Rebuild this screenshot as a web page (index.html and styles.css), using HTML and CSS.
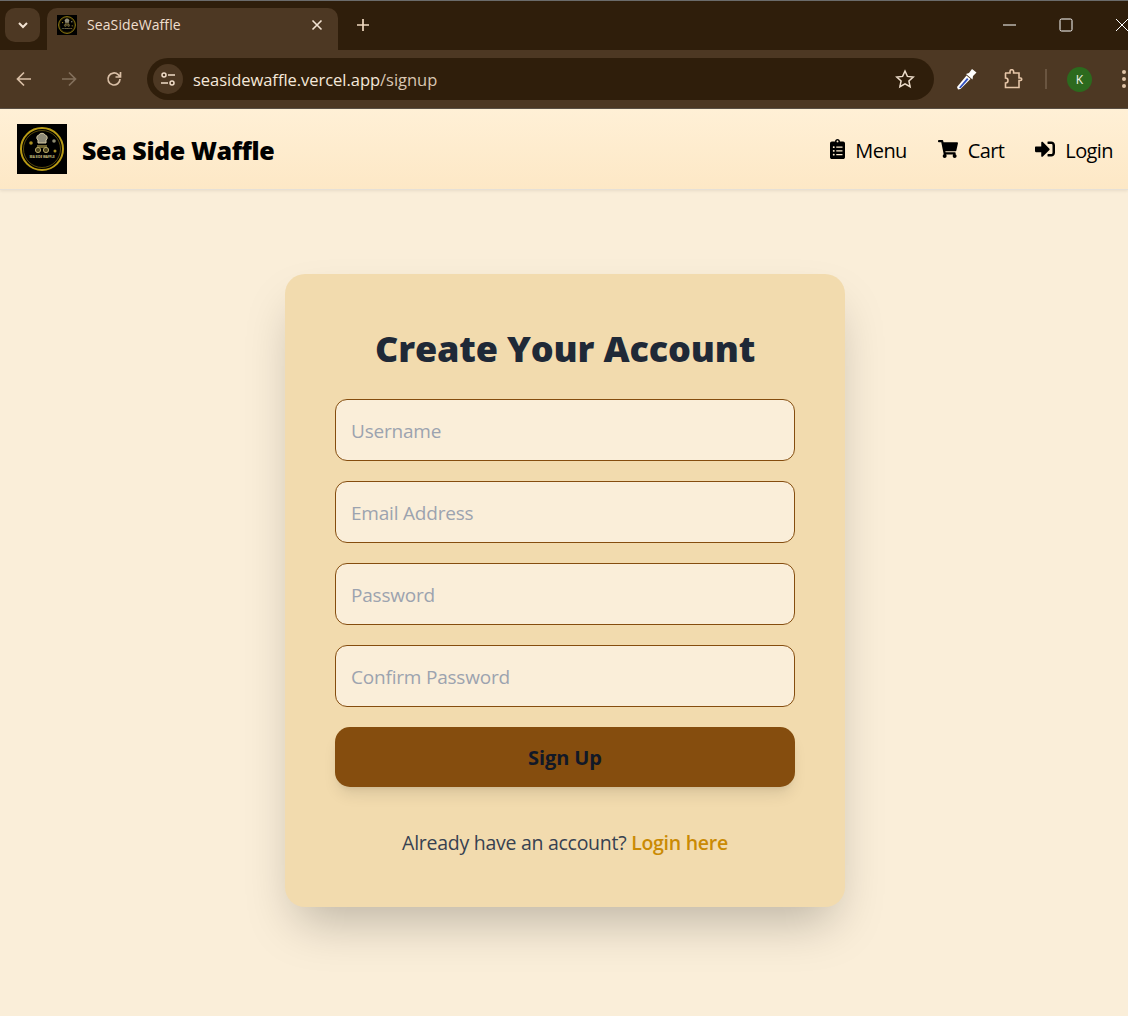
FILE: index.html
```html
<!DOCTYPE html>
<html lang="en">
<head>
  <meta charset="UTF-8">
  <meta name="viewport" content="width=device-width, initial-scale=1">
  <title>SeaSideWaffle</title>
  <link rel="stylesheet" href="styles.css">
</head>
<body>
  <!-- browser chrome -->
  <div class="tabstrip">
    <div class="tab-switch">
      <svg width="12" height="12" viewBox="0 0 12 12"><path d="M2 4l4 4 4-4" fill="none" stroke="#f3e3d3" stroke-width="2"/></svg>
    </div>
    <div class="tab">
      <svg class="favicon" width="20" height="20" viewBox="0 0 50 50"><use href="#logo"/></svg>
      <span class="tab-title">SeaSideWaffle</span>
      <svg class="tab-close" width="12" height="12" viewBox="0 0 12 12"><path d="M1.5 1.5l9 9M10.5 1.5l-9 9" stroke="#f3e3d3" stroke-width="1.6"/></svg>
    </div>
    <svg class="new-tab" width="14" height="14" viewBox="0 0 14 14"><path d="M7 1v12M1 7h12" stroke="#f0d9c0" stroke-width="1.7"/></svg>
    <div class="win-btns">
      <svg width="14" height="14" viewBox="0 0 14 14"><path d="M0 7h13" stroke="#fff" stroke-width="1"/></svg>
      <svg width="14" height="14" viewBox="0 0 14 14"><rect x="1" y="1" width="12" height="12" rx="1.5" fill="none" stroke="#fff"/></svg>
      <svg width="14" height="14" viewBox="0 0 14 14"><path d="M1 1l12 12M13 1L1 13" stroke="#fff"/></svg>
    </div>
  </div>
  <div class="toolbar">
    <svg class="tb-icon" width="18" height="18" viewBox="0 0 18 18"><path d="M16 9H2.5M9 2.5L2.5 9 9 15.500" fill="none" stroke="#d9bfa6" stroke-width="1.700"/></svg>
    <svg class="tb-icon" width="18" height="18" viewBox="0 0 18 18"><path d="M2 9h13.500M9 2.500L15.500 9 9 15.500" fill="none" stroke="#83705c" stroke-width="1.700"/></svg>
    <svg class="tb-icon" width="18" height="18" viewBox="0 0 18 18"><path d="M15 9a6 6 0 1 1-1.800-4.300L15.500 7M15.500 2v5h-5" fill="none" stroke="#d9bfa6" stroke-width="1.700"/></svg>
    <div class="omnibox">
      <div class="site-info">
        <svg width="16" height="16" viewBox="0 0 16 16" fill="none" stroke="#f0dcc8" stroke-width="1.500"><circle cx="4" cy="4" r="2"/><path d="M8 4h7M1 12h7"/><circle cx="12" cy="12" r="2"/></svg>
      </div>
      <span class="url"><span class="url-host">seasidewaffle.vercel.app</span>/signup</span>
      <svg class="star" width="20" height="20" viewBox="0 0 20 20"><path d="M10 2l2.400 5.400 5.800.6-4.300 3.900 1.200 5.800L10 14.800l-5.100 2.900 1.200-5.800L1.800 8l5.800-.6z" fill="none" stroke="#ecdcca" stroke-width="1.500"/></svg>
    </div>
    <svg class="dropper" width="20" height="22" viewBox="0 0 20 22"><path d="M1 21.500L0 19 9.500 7.500l4 3.500L3.500 21z" fill="#fff"/><path d="M2 19.500L10 10l1.500 1.300L3.500 20.300z" fill="#2f4fc0"/><path d="M9 6l3-1 3-4 4.500 3.500L16 8l-.5 3.500z" fill="#fff"/></svg>
    <svg class="puzzle" width="20" height="20" viewBox="0 0 20 20"><path d="M2 4h5V2.500a1.800 1.800 0 0 1 3.600 0V4H16v5h1.500a1 1 0 0 1 0 2.500H16v7H2.500v-4.500a2.200 2.200 0 0 0 0-5V4z" fill="none" stroke="#e6c6a8" stroke-width="1.600"/></svg>
    <span class="tb-sep"></span>
    <span class="avatar">K</span>
    <span class="kebab"><i></i><i></i><i></i></span>
  </div>

  <!-- site nav -->
  <nav class="navbar">
    <a class="brand" href="#">
      <svg class="logo" width="50" height="50" viewBox="0 0 50 50">
        <defs>
          <g id="logo">
            <rect width="50" height="50" fill="#000"/>
            <circle cx="25" cy="25" r="21" fill="none" stroke="#b89a14" stroke-width="2"/>
            <circle cx="25" cy="25" r="18.500" fill="none" stroke="#7d6812" stroke-width=".7"/>
            <path d="M21 16a2.800 2.800 0 0 1 .8-5 3.800 3.800 0 0 1 6.400 0 2.800 2.800 0 0 1 .8 5v3h-8z" fill="#8e8a78" stroke="#d6c9a0" stroke-width="1"/>
            <path d="M20 21h10v3H20z" fill="#6d6230"/>
            <circle cx="21" cy="26" r="2.600" fill="#4c4420" stroke="#b5a564" stroke-width="1"/>
            <circle cx="29" cy="26" r="2.600" fill="#4c4420" stroke="#b5a564" stroke-width="1"/>
            <circle cx="14" cy="19" r="1.800" fill="#a98f22"/>
            <circle cx="37" cy="17" r="1.800" fill="#8d8a70"/>
            <circle cx="38" cy="27" r="1.500" fill="#a98f22"/>
            <text class="logo-text" x="25" y="34" text-anchor="middle">SEA SIDE WAFFLE</text>
          </g>
        </defs>
        <use href="#logo"/>
      </svg>
      <span class="brand-name">Sea Side Waffle</span>
    </a>
    <div class="nav-links">
      <a href="#">
        <svg width="15" height="20" viewBox="0 0 384 512"><path d="M336 64h-80c0-35.300-28.700-64-64-64s-64 28.700-64 64H48C21.500 64 0 85.500 0 112v352c0 26.500 21.500 48 48 48h288c26.500 0 48-21.500 48-48V112c0-26.500-21.500-48-48-48zM96 424c-13.300 0-24-10.700-24-24s10.700-24 24-24 24 10.700 24 24-10.700 24-24 24zm0-96c-13.300 0-24-10.700-24-24s10.700-24 24-24 24 10.700 24 24-10.700 24-24 24zm0-96c-13.300 0-24-10.700-24-24s10.700-24 24-24 24 10.700 24 24-10.700 24-24 24zm96-192c13.300 0 24 10.700 24 24s-10.700 24-24 24-24-10.700-24-24 10.700-24 24-24zm128 368c0 4.400-3.600 8-8 8H168c-4.400 0-8-3.600-8-8v-16c0-4.400 3.600-8 8-8h144c4.400 0 8 3.600 8 8v16zm0-96c0 4.400-3.600 8-8 8H168c-4.400 0-8-3.600-8-8v-16c0-4.400 3.600-8 8-8h144c4.400 0 8 3.600 8 8v16zm0-96c0 4.400-3.600 8-8 8H168c-4.400 0-8-3.600-8-8v-16c0-4.400 3.600-8 8-8h144c4.400 0 8 3.600 8 8v16z"/></svg>
        Menu
      </a>
      <a href="#">
        <svg width="20" height="18" viewBox="0 0 576 512"><path d="M528.120 301.319l47.273-208C578.806 78.301 567.391 64 551.990 64H159.208l-9.166-44.810C147.758 8.021 137.930 0 126.529 0H24C10.745 0 0 10.745 0 24v16c0 13.255 10.745 24 24 24h69.883l70.248 343.435C147.325 417.100 136 435.222 136 456c0 30.928 25.072 56 56 56s56-25.072 56-56c0-15.674-6.447-29.835-16.824-40h209.647C430.447 426.165 424 440.326 424 456c0 30.928 25.072 56 56 56s56-25.072 56-56c0-22.172-12.888-41.332-31.579-50.405l5.517-24.276c3.413-15.018-8.002-29.319-23.403-29.319H218.117l-6.545-32h293.145c11.206 0 20.920-7.754 23.403-18.681z"/></svg>
        Cart
      </a>
      <a href="#">
        <svg width="20" height="20" viewBox="0 0 512 512"><path d="M416 448h-84c-6.600 0-12-5.400-12-12v-40c0-6.600 5.400-12 12-12h84c17.700 0 32-14.300 32-32V160c0-17.700-14.300-32-32-32h-84c-6.600 0-12-5.400-12-12V76c0-6.600 5.400-12 12-12h84c53 0 96 43 96 96v192c0 53-43 96-96 96zm-47-201L201 79c-15-15-41-4.500-41 17v96H24c-13.300 0-24 10.700-24 24v96c0 13.300 10.700 24 24 24h136v96c0 21.500 26 32 41 17l168-168c9.300-9.400 9.300-24.600 0-34z"/></svg>
        Login
      </a>
    </div>
  </nav>

  <main class="page">
    <section class="card">
      <h1>Create Your Account</h1>
      <form class="signup-form">
        <input type="text" placeholder="Username">
        <input type="email" placeholder="Email Address">
        <input type="password" placeholder="Password">
        <input type="password" placeholder="Confirm Password">
        <button type="button">Sign Up</button>
      </form>
      <p class="switch">Already have an account? <a href="#">Login here</a></p>
    </section>
  </main>
</body>
</html>
```

FILE: styles.css
```css
* { box-sizing: border-box; }
html, body { margin: 0; height: 100%; }
body { width: 1128px; height: 1016px; overflow: hidden; font-family: "Open Sans", "Noto Sans", sans-serif; background: #faeed9; display: flex; flex-direction: column; }
a { text-decoration: none; color: inherit; }

/* browser chrome */
.tabstrip { height: 50px; flex: none; background: #2f1e0b; border-top: 1px solid #6b6b6b; display: flex; align-items: flex-start; padding: 7px 0 0 5px; }
.tab-switch { width: 35px; height: 34px; border-radius: 10px; background: #4d3823; display: flex; align-items: center; justify-content: center; }
.tab { width: 291px; height: 42px; margin-left: 7px; background: #4d3823; border-radius: 10px 10px 0 0; display: flex; align-items: flex-start; padding: 7px 15px 0 10px; }
.favicon { flex: none; }
.tab-title { font-size: 14px; color: #f0dfce; margin-left: 10px; flex: 1; line-height: 20px; letter-spacing: .1px; }
.tab-close { margin-top: 4px; }
.new-tab { margin: 10px 0 0 18px; }
.win-btns { margin-left: auto; display: flex; gap: 42px; padding-top: 10px; margin-right: -1px; }
.toolbar { height: 59px; flex: none; background: #4d3823; display: flex; align-items: center; padding: 0 0 0 15px; border-bottom: 1px solid #5c5146; }
.tb-icon { margin-right: 27px; flex: none; }
.tb-icon:nth-child(3) { margin-right: 24px; }
.omnibox { width: 787px; height: 42px; border-radius: 21px; background: #2f1e0b; display: flex; align-items: center; padding: 0 19px 0 6px; flex: none; }
.site-info { width: 30px; height: 30px; border-radius: 50%; background: #4d3823; display: flex; align-items: center; justify-content: center; }
.url { font-size: 16.500px; color: #d9c6b3; margin-left: 10px; flex: 1; letter-spacing: -.03px; }
.url-host { color: #f5e8da; }
.dropper { margin-left: 23px; flex: none; }
.puzzle { margin-left: 26px; flex: none; }
.tb-sep { width: 2px; height: 20px; background: #6a5540; margin-left: 22px; flex: none; }
.avatar { width: 25px; height: 25px; border-radius: 50%; background: #2c6a1e; color: #f2f2e8; font-size: 12px; display: flex; align-items: center; justify-content: center; margin-left: 20px; flex: none; }
.kebab { display: flex; flex-direction: column; gap: 3px; margin-left: 30px; flex: none; }
.kebab i { width: 4px; height: 4px; border-radius: 50%; background: #e0c3a6; display: block; }

/* nav */
.navbar { height: 81px; flex: none; background: linear-gradient(#fff0d6, #fde8c6); border-bottom: 1px solid #e6e0d6; box-shadow: 0 1px 3px rgba(0,0,0,.08); display: flex; align-items: center; justify-content: space-between; padding: 0 15px 0 17px; position: relative; }
.brand { display: flex; align-items: center; gap: 15px; color: #000; }
.logo { display: block; }
.logo-text { font-size: 3px; font-weight: 700; fill: #d8c98a; }
.brand-name { font-size: 25px; font-weight: 800; letter-spacing: -.4px; padding-top: 2px; }
.nav-links { display: flex; gap: 31px; color: #000; font-size: 20px; padding-top: 2px; }
.nav-links a { display: flex; align-items: center; gap: 10px; letter-spacing: -.6px; }
.nav-links svg { display: block; margin-top: -3px; }

/* form card */
.page { flex: 1; display: flex; justify-content: center; align-items: flex-start; padding: 84px 0 0 2px; }
.card { width: 560px; height: 633px; background: #f2dbae; border-radius: 20px; padding: 50px; box-shadow: 0 25px 50px -12px rgba(0,0,0,.25); }
.card h1 { margin: 0 0 25px; font-size: 36px; line-height: 50px; font-weight: 800; text-align: center; color: #1f2937; letter-spacing: -.15px; }
.signup-form { display: flex; flex-direction: column; gap: 20px; }
.signup-form input { height: 62px; width: 100%; border: 1px solid #854d0e; border-radius: 12px; background: #faeed9; padding: 2px 15px 0; font: inherit; font-size: 19px; letter-spacing: -.2px; outline: none; }
.signup-form input::placeholder { color: #9ca3af; opacity: 1; }
.signup-form button { height: 60px; border: none; border-radius: 15px; background: #854d0e; color: #111827; font: inherit; font-size: 20px; font-weight: 700; letter-spacing: -.1px; box-shadow: 0 10px 15px -3px rgba(0,0,0,.1), 0 4px 6px -4px rgba(0,0,0,.1); }
.switch { margin: 40px 0 0; text-align: center; font-size: 19.500px; line-height: 32px; color: #374151; letter-spacing: -.27px; }
.switch a { color: #ca8a04; font-weight: 600; }
```
